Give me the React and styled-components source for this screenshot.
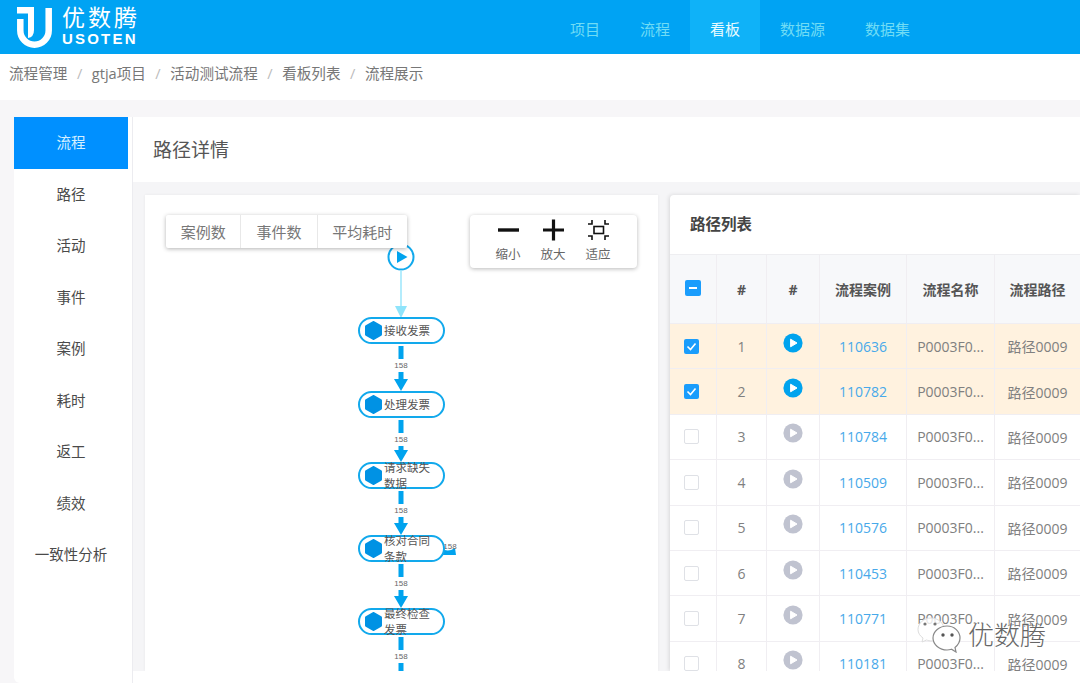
import React from 'react';
import styled, { createGlobalStyle } from 'styled-components';

const GlobalStyle = createGlobalStyle`
  html, body {
    margin: 0;
    padding: 0;
    background: #fff;
    font-family: "Open Sans", "Noto Sans CJK SC", sans-serif;
    overflow: hidden;
  }
  * { box-sizing: border-box; }
`;

const Page = styled.div`
  position: relative;
  width: 1080px;
  height: 683px;
  overflow: hidden;
  display: flex;
  flex-direction: column;
`;

const Header = styled.header`
  height: 54px;
  flex: none;
  background: #00a3f3;
  display: flex;
  align-items: stretch;
  padding: 0 150px 0 17px;
`;

const Logo = styled.div`
  display: flex;
  align-items: center;
  gap: 10px;
  color: #fff;
`;

const LogoText = styled.div`
  display: flex;
  flex-direction: column;
  width: 80px;
  padding-bottom: 3px;
`;

const LogoName = styled.div`
  font-size: 23px;
  line-height: 27px;
  letter-spacing: 3px;
  white-space: nowrap;
`;

const LogoEn = styled.div`
  font-family: "Liberation Sans", sans-serif;
  font-size: 15px;
  font-weight: 700;
  line-height: 16px;
  letter-spacing: 2.2px;
`;

const Nav = styled.nav`
  margin-left: auto;
  display: flex;
`;

const NavItem = styled.div`
  padding: 2px 20px 0;
  font-size: 15px;
  display: flex;
  align-items: center;
  color: ${props => (props.$active ? '#e8fbff' : '#70dcf5')};
  background: ${props => (props.$active ? '#0fb2f8' : 'transparent')};
`;

const Breadcrumb = styled.div`
  height: 46px;
  flex: none;
  padding: 8px 0 0 9px;
  font-size: 14.6px;
  line-height: 22px;
  color: #777;
  display: flex;
`;

const Slash = styled.span`
  margin: 0 9.5px;
  color: #bbb;
`;

const Main = styled.div`
  flex: 1;
  min-height: 0;
  display: flex;
  padding: 17px 0 0 14px;
  background: linear-gradient(#fff, #fff) no-repeat right bottom / 947px 12px, #f7f6f8;
`;

const Sidebar = styled.aside`
  width: 119px;
  flex: none;
  padding-right: 4px;
  background: #fff;
  border-right: 1px solid #ececf0;
  border-bottom-left-radius: 6px;
`;

const SideItem = styled.div`
  height: 51.5px;
  padding-bottom: 2px;
  display: flex;
  align-items: center;
  justify-content: center;
  font-size: 14.5px;
  color: ${props => (props.$active ? '#d4efff' : '#4a4a4a')};
  background: ${props => (props.$active ? '#0090ff' : 'transparent')};
`;

const Content = styled.div`
  flex: 1;
  min-width: 0;
  height: 554px;
  display: flex;
  flex-direction: column;
  background: #f5f5f7;
  overflow: hidden;
`;

const TitleBar = styled.div`
  height: 65px;
  flex: none;
  background: #fff;
  padding: 0 0 2px 20px;
  display: flex;
  align-items: center;
  font-size: 19px;
  color: #555;
`;

const Panels = styled.div`
  flex: 1;
  min-height: 0;
  display: flex;
  gap: 12px;
  padding: 13px 0 0 12px;
`;

const FlowPanel = styled.section`
  position: relative;
  width: 513px;
  flex: none;
  background: #fff;
  box-shadow: 0 0 3px rgba(0, 0, 0, 0.06);
  overflow: hidden;
`;

const Tabs = styled.div`
  position: absolute;
  left: 21px;
  top: 20px;
  width: 241px;
  height: 33px;
  display: flex;
  background: #fff;
  box-shadow: 0 1px 4px rgba(0, 0, 0, 0.3);
  border-radius: 2px;
  z-index: 2;
`;

const Tab = styled.div`
  flex: ${props => props.$flex};
  display: flex;
  align-items: center;
  justify-content: center;
  font-size: 15px;
  color: #777;
  & + & {
    border-left: 1px solid #e8e8e8;
  }
`;

const Tools = styled.div`
  position: absolute;
  left: 325px;
  top: 20px;
  width: 167px;
  height: 53px;
  display: flex;
  justify-content: center;
  gap: 20px;
  padding: 3px 1px 0 0;
  background: #fff;
  border-radius: 4px;
  box-shadow: 0 1px 4px rgba(0, 0, 0, 0.28);
  z-index: 2;
`;

const Tool = styled.div`
  display: flex;
  flex-direction: column;
  align-items: center;
  width: 25px;
  font-size: 12.5px;
  line-height: 16px;
  color: #666;
  white-space: nowrap;
`;

const ToolIcon = styled.svg`
  width: 25px;
  height: 24px;
  margin-bottom: 5px;
  color: #111;
`;

const Edges = styled.svg`
  position: absolute;
  left: 0;
  top: 0;
  width: 513px;
  height: 476px;
`;

const EdgeLabel = styled.text`
  font-family: "Liberation Sans", sans-serif;
  font-size: 8px;
  fill: #666;
  text-anchor: middle;
`;

const Node = styled.div`
  position: absolute;
  left: 213px;
  top: ${props => props.$top}px;
  width: 87px;
  height: 27px;
  border: 2px solid #12a9ec;
  border-radius: 14px;
  background: #fff;
  display: flex;
  align-items: center;
  padding-left: 4px;
`;

const NodeDot = styled.svg`
  width: 19px;
  height: 19px;
  flex: none;
  margin-right: 1px;
`;

const NodeText = styled.div`
  width: 48px;
  font-size: 11.5px;
  line-height: 15.5px;
  color: #555;
  flex: none;
`;

const ListPanel = styled.section`
  flex: 1;
  min-width: 0;
  background: #fff;
  border-radius: 4px 0 0 0;
  box-shadow: -1px 0 4px rgba(0, 0, 0, 0.12);
  overflow: hidden;
`;

const ListTitle = styled.div`
  height: 60px;
  padding: 0 0 2px 20px;
  display: flex;
  align-items: center;
  font-size: 15.5px;
  font-weight: 700;
  color: #444;
  border-bottom: 1px solid #eeeef1;
`;

const Row = styled.div`
  display: grid;
  grid-template-columns: 46px 50px 53px 87px 88px 86px;
  height: ${props => (props.$head ? '69px' : '45.4px')};
  background: ${props => (props.$head ? '#f7f8fa' : props.$selected ? '#fff2df' : '#fff')};
  border-bottom: 1px solid #f0eef2;
`;

const Cell = styled.div`
  display: flex;
  align-items: center;
  justify-content: center;
  font-size: 14px;
  white-space: nowrap;
  font-weight: ${props => (props.$head ? 700 : 400)};
  color: ${props => (props.$link ? '#48a9ea' : props.$head ? '#555' : '#808080')};
  & + & {
    border-left: 1px solid #f0eef2;
  }
`;

const PlayBtn = styled.svg`
  width: 20px;
  height: 20px;
  margin-top: -7px;
  color: ${props => (props.$on ? '#00a3ee' : '#c0c3d0')};
`;

const Box = styled.span`
  width: ${props => (props.$head ? '16px' : '15px')};
  height: ${props => (props.$head ? '16px' : '15px')};
  margin: ${props => (props.$head ? '0 0 2px' : '0 3px 0 0')};
  border-radius: 2px;
  display: inline-flex;
  align-items: center;
  justify-content: center;
  background: ${props => (props.$on ? '#1a9dfc' : '#fff')};
  border: ${props => (props.$on ? 'none' : '1.5px solid #dfe1e6')};
`;

const Watermark = styled.div`
  position: absolute;
  left: 917px;
  top: 616px;
  display: flex;
  align-items: center;
  gap: 7px;
  z-index: 5;
`;

const WatermarkText = styled.span`
  font-size: 26px;
  font-weight: 300;
  color: #666;
  text-shadow: 0 0 2px #fff, 0 0 2px #fff;
  line-height: 38px;
`;

const navItems = ['项目', '流程', '看板', '数据源', '数据集'];
const crumbs = ['流程管理', 'gtja项目', '活动测试流程', '看板列表', '流程展示'];
const sideItems = ['流程', '路径', '活动', '事件', '案例', '耗时', '返工', '绩效', '一致性分析'];
const nodes = [
  { top: 122, label: '接收发票' },
  { top: 196, label: '处理发票' },
  { top: 267, label: '请求缺失数据' },
  { top: 340, label: '核对合同条款' },
  { top: 413, label: '最终检查发票' },
];
const edges = [
  { top: 149, end: 196 },
  { top: 223, end: 267 },
  { top: 294, end: 340 },
  { top: 367, end: 413 },
  { top: 440 },
];
const rows = [
  { no: 1, id: 110636, on: true },
  { no: 2, id: 110782, on: true },
  { no: 3, id: 110784 },
  { no: 4, id: 110509 },
  { no: 5, id: 110576 },
  { no: 6, id: 110453 },
  { no: 7, id: 110771 },
  { no: 8, id: 110181 },
];

function LogoMark() {
  return (
    <svg width="35" height="41" viewBox="0 0 35 41" fill="none">
      <path d="M3.3 12V23.500A14.200 14.200 0 0 0 31.700 23.500V1" stroke="#fff" strokeWidth="6.500" />
      <path d="M0 0H17V23Q17 30 11 31V6.500H0Z" fill="#fff" />
    </svg>
  );
}

function PlayIcon({ on }) {
  return (
    <PlayBtn $on={on} viewBox="0 0 20 20">
      <circle cx="10" cy="10" r="9.600" fill="currentColor" />
      <path d="M7.600 6.200L14 10L7.600 13.800Z" fill="#fff" stroke="#fff" strokeWidth="1" strokeLinejoin="round" />
    </PlayBtn>
  );
}

function Hexagon() {
  return (
    <NodeDot viewBox="0 0 19 19">
      <path d="M9.500 1.500L16.500 5.500V13.500L9.500 17.500L2.500 13.500V5.500Z" fill="#0092e4" stroke="#0092e4" strokeWidth="3" strokeLinejoin="round" />
    </NodeDot>
  );
}

function Edge({ top, end }) {
  const x = 256;
  return (
    <g>
      <rect x={x - 2.5} y={top + 2} width="5" height="13" fill="#00a3ee" />
      <EdgeLabel x={x} y={top + 24}>158</EdgeLabel>
      <rect x={x - 2.5} y={top + 28} width="5" height={end ? 8 : 8} fill="#00a3ee" />
      {end && <path d={`M${x - 7} ${end - 12}H${x + 7}L${x} ${end}Z`} fill="#00a3ee" />}
    </g>
  );
}

function FlowChart() {
  return (
    <FlowPanel>
      <Tabs>
        <Tab $flex="75">案例数</Tab>
        <Tab $flex="76">事件数</Tab>
        <Tab $flex="90">平均耗时</Tab>
      </Tabs>
      <Tools>
        <Tool>
          <ToolIcon viewBox="0 0 25 24">
            <path d="M2 12H23" stroke="currentColor" strokeWidth="3.400" />
          </ToolIcon>
          缩小
        </Tool>
        <Tool>
          <ToolIcon viewBox="0 0 25 24">
            <path d="M2 12H23M12.500 1.500V22.500" stroke="currentColor" strokeWidth="3.200" />
          </ToolIcon>
          放大
        </Tool>
        <Tool>
          <ToolIcon viewBox="0 0 25 24" fill="none">
            <path d="M2 6H6V2M23 6H19V2M2 18H6V22M23 18H19V22" stroke="currentColor" strokeWidth="1.600" />
            <rect x="8" y="8.500" width="9.500" height="7" stroke="currentColor" strokeWidth="1.600" />
          </ToolIcon>
          适应
        </Tool>
      </Tools>
      <Edges viewBox="0 0 513 476">
        <circle cx="256" cy="62" r="12.500" fill="#fff" stroke="#12a9ec" strokeWidth="2" />
        <path d="M252 56L262.500 62L252 68Z" fill="#00a3ee" />
        <path d="M256 75V112" stroke="#9be6fb" strokeWidth="1.500" />
        <path d="M250 111H262L256 123Z" fill="#8fe4fb" />
        {edges.map(edge => (
          <Edge key={edge.top} top={edge.top} end={edge.end} />
        ))}
        <path d="M297 353Q302 358 310 353L311 360H297Z" fill="#00a3ee" />
        <EdgeLabel x="305" y="354">158</EdgeLabel>
      </Edges>
      {nodes.map(node => (
        <Node key={node.label} $top={node.top}>
          <Hexagon />
          <NodeText>{node.label}</NodeText>
        </Node>
      ))}
    </FlowPanel>
  );
}

function PathList() {
  return (
    <ListPanel>
      <ListTitle>路径列表</ListTitle>
      <Row $head>
        <Cell $head>
          <Box $head $on>
            <svg width="10" height="10" viewBox="0 0 10 10">
              <path d="M1 5H9" stroke="#fff" strokeWidth="2" />
            </svg>
          </Box>
        </Cell>
        <Cell $head>#</Cell>
        <Cell $head>#</Cell>
        <Cell $head>流程案例</Cell>
        <Cell $head>流程名称</Cell>
        <Cell $head>流程路径</Cell>
      </Row>
      {rows.map(row => (
        <Row key={row.no} $selected={row.on}>
          <Cell>
            <Box $on={row.on}>
              {row.on && (
                <svg width="11" height="11" viewBox="0 0 11 11" fill="none">
                  <path d="M1.500 5.500L4.500 8.500L9.500 2.500" stroke="#fff" strokeWidth="1.600" />
                </svg>
              )}
            </Box>
          </Cell>
          <Cell>{row.no}</Cell>
          <Cell>
            <PlayIcon on={row.on} />
          </Cell>
          <Cell $link>{row.id}</Cell>
          <Cell>P0003F0...</Cell>
          <Cell>路径0009</Cell>
        </Row>
      ))}
    </ListPanel>
  );
}

export default function App() {
  return (
    <Page>
      <GlobalStyle />
      <Header>
        <Logo>
          <LogoMark />
          <LogoText>
            <LogoName>优数腾</LogoName>
            <LogoEn>USOTEN</LogoEn>
          </LogoText>
        </Logo>
        <Nav>
          {navItems.map(item => (
            <NavItem key={item} $active={item === '看板'}>
              {item}
            </NavItem>
          ))}
        </Nav>
      </Header>
      <Breadcrumb>
        {crumbs.map((crumb, i) => (
          <React.Fragment key={crumb}>
            {i > 0 && <Slash>/</Slash>}
            <span>{crumb}</span>
          </React.Fragment>
        ))}
      </Breadcrumb>
      <Main>
        <Sidebar>
          {sideItems.map(item => (
            <SideItem key={item} $active={item === '流程'}>
              {item}
            </SideItem>
          ))}
        </Sidebar>
        <Content>
          <TitleBar>路径详情</TitleBar>
          <Panels>
            <FlowChart />
            <PathList />
          </Panels>
        </Content>
      </Main>
      <Watermark>
        <svg width="44" height="36" viewBox="0 0 44 36" fill="none">
          <path d="M14 1C7 1 1 6 1 12.500C1 16 3 19 6 21L5 25L9.500 23C11 23.500 12.500 24 15 24C22 24 27 18 27 12.500C27 6 21 1 14 1Z" fill="#fff" fillOpacity="0.8" stroke="#ddd" strokeWidth="1" />
          <path d="M30 9C22.500 9 16 14.500 16 21C16 27.500 22.500 33 30 33C31.500 33 33 32.700 34.500 32.200L39 35L38 30.500C41 28 43 25 43 21C43 14.500 37.500 9 30 9Z" fill="#fff" stroke="#888" strokeWidth="1.200" />
          <circle cx="8" cy="7" r="1.600" fill="#777" />
          <circle cx="18" cy="7" r="1.600" fill="#777" />
          <circle cx="26" cy="18" r="1.700" fill="#555" />
          <circle cx="35" cy="18" r="1.700" fill="#555" />
        </svg>
        <WatermarkText>优数腾</WatermarkText>
      </Watermark>
    </Page>
  );
}
